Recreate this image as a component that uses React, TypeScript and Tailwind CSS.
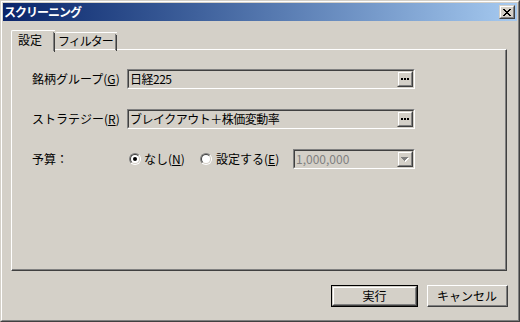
import React from 'react';

const font = { fontFamily: '"Noto Sans CJK JP", "Noto Sans", sans-serif' };

// classic 3D raised box used for small buttons
const Raised: React.FC<{ className?: string; children?: React.ReactNode }> = ({ className = '', children }) => (
  <div className={`border border-t-[#d4d0c8] border-l-[#d4d0c8] border-r-[#404040] border-b-[#404040] ${className}`}>
    <div className="w-full h-full border border-t-white border-l-white border-r-[#808080] border-b-[#808080] bg-[#d4d0c8] flex items-center justify-center">
      {children}
    </div>
  </div>
);

const Sunken: React.FC<{ className?: string; children?: React.ReactNode }> = ({ className = '', children }) => (
  <div className={`border border-t-[#808080] border-l-[#808080] border-r-white border-b-white ${className}`}>
    <div className="w-full h-full border border-t-[#404040] border-l-[#404040] border-r-[#d4d0c8] border-b-[#d4d0c8] bg-[#d4d0c8] flex items-center">
      {children}
    </div>
  </div>
);

const Dots = () => (
  <svg width="8" height="2" shapeRendering="crispEdges">
    <rect x="0" y="0" width="2" height="2" fill="#000" />
    <rect x="3" y="0" width="2" height="2" fill="#000" />
    <rect x="6" y="0" width="2" height="2" fill="#000" />
  </svg>
);

const BrowseField: React.FC<{ value: string }> = ({ value }) => (
  <Sunken className="w-[288px] h-[20px]">
    <span className="flex-1 pl-[1px] text-[12px] leading-[16px] text-black whitespace-nowrap tracking-[-0.5px]">{value}</span>
    <Raised className="w-[16px] h-[16px]">
      <Dots />
    </Raised>
  </Sunken>
);

const Radio: React.FC<{ checked?: boolean }> = ({ checked }) => (
  <div className="w-[12px] h-[12px] rounded-full border border-t-[#808080] border-l-[#808080] border-r-white border-b-white">
    <div className="w-full h-full rounded-full border border-t-[#404040] border-l-[#404040] border-r-[#d4d0c8] border-b-[#d4d0c8] bg-white flex items-center justify-center">
      {checked && <div className="w-[4px] h-[4px] rounded-full bg-black" />}
    </div>
  </div>
);

export default function App() {
  return (
    <div style={font} className="w-[520px] h-[322px] bg-[#d4d0c8] border border-t-[#d4d0c8] border-l-[#d4d0c8] border-r-[#404040] border-b-[#404040] text-black">
      <div className="h-full border border-t-white border-l-white border-r-[#808080] border-b-[#808080] p-px flex flex-col">
        {/* Title bar */}
        <div className="h-[18px] flex items-center justify-between bg-gradient-to-r from-[#0a246a] to-[#a6caf0] pl-[1px] pr-[2px]">
          <span className="text-[12px] font-bold text-white leading-none tracking-[-1px]">スクリーニング</span>
          <Raised className="w-[16px] h-[14px]">
            <svg width="8" height="7" shapeRendering="crispEdges">
              <path d="M0 0h2v1H0zM6 0h2v1H6zM1 1h2v1H1zM5 1h2v1H5zM2 2h4v1H2zM3 3h2v1H3zM2 4h4v1H2zM1 5h2v1H1zM5 5h2v1H5zM0 6h2v1H0zM6 6h2v1H6z" fill="#000" />
            </svg>
          </Raised>
        </div>

        {/* Tabs */}
        <div className="mt-[9px] ml-[8px] h-[20px] flex items-end relative z-10">
          <div className="h-[20px] w-[44px] bg-[#d4d0c8] border-t border-l border-t-white border-l-white rounded-tl-[2px] flex">
            <div className="flex-1 pl-[6px] pt-[1px] text-[12px] leading-[16px] whitespace-nowrap">設定</div>
            <div className="w-[2px] h-full flex">
              <div className="w-px h-full bg-[#808080] mt-px" />
              <div className="w-px h-full bg-[#404040] mt-[2px]" />
            </div>
          </div>
          <div className="h-[17px] mb-px w-[62px] border-t border-t-white flex rounded-tl-[2px]">
            <div className="flex-1 pl-[3px] text-[12px] leading-[15px] whitespace-nowrap tracking-[-1px]">フィルター</div>
            <div className="w-[2px] h-full flex">
              <div className="w-px h-full bg-[#808080] mt-px" />
              <div className="w-px h-full bg-[#404040] mt-[2px]" />
            </div>
          </div>
        </div>

        {/* Tab panel */}
        <div className="ml-[8px] mt-[-1px] w-[496px] h-[222px] border border-t-white border-l-white border-r-[#404040] border-b-[#404040]">
          <div className="w-full h-full border-r border-b border-r-[#808080] border-b-[#808080] pl-[20px] pt-[19px] flex flex-col gap-[20px] text-[12px] leading-[16px]">
            <div className="flex items-center h-[20px]">
              <div className="w-[95px] whitespace-nowrap">銘柄グループ(<u>G</u>)</div>
              <BrowseField value="日経225" />
            </div>
            <div className="flex items-center h-[20px]">
              <div className="w-[95px] whitespace-nowrap">ストラテジー(<u>R</u>)</div>
              <BrowseField value="ブレイクアウト＋株価変動率" />
            </div>
            <div className="flex items-center h-[20px]">
              <div className="w-[95px]">予算：</div>
              <div className="w-[73px] flex items-center gap-[3px] pl-[2px]">
                <Radio checked />
                <span className="whitespace-nowrap">なし(<u>N</u>)</span>
              </div>
              <div className="w-[93px] flex items-center gap-[4px]">
                <Radio />
                <span className="whitespace-nowrap">設定する(<u>E</u>)</span>
              </div>
              <Sunken className="w-[122px] h-[20px]">
                <span className="flex-1 pl-[1px] text-[#808080]">1,000,000</span>
                <Raised className="w-[16px] h-[16px]">
                  <svg width="8" height="5" shapeRendering="crispEdges">
                    <path d="M1 1h7v1H1zM2 2h5v1H2zM3 3h3v1H3zM4 4h1v1H4z" fill="#fff" />
                    <path d="M0 0h7v1H0zM1 1h5v1H1zM2 2h3v1H2zM3 3h1v1H3z" fill="#808080" />
                  </svg>
                </Raised>
              </Sunken>
            </div>
          </div>
        </div>

        {/* Buttons */}
        <div className="mt-[14px] mr-[9px] flex justify-end gap-[9px] text-[12px] leading-[16px]">
          <div className="w-[87px] h-[22px] border border-black">
            <Raised className="w-full h-full">
              <span>実行</span>
            </Raised>
          </div>
          <div className="w-[81px] h-[22px] border border-t-white border-l-white border-r-[#404040] border-b-[#404040]">
            <div className="w-full h-full border-r border-b border-r-[#808080] border-b-[#808080] flex items-center justify-center">
              <span>キャンセル</span>
            </div>
          </div>
        </div>
      </div>
    </div>
  );
}
